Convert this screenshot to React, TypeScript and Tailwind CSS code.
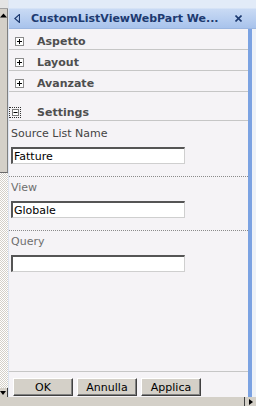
const FIELDS = [
  { label: 'Source List Name', value: 'Fatture', tone: 'text-[#444444]', first: true, divider: true },
  { label: 'View', value: 'Globale', tone: 'text-[#6e6e6e]', first: false, divider: true },
  { label: 'Query', value: '', tone: 'text-[#6e6e6e]', first: false, divider: false },
]

const SECTIONS = ['Aspetto', 'Layout', 'Avanzate']

function ToggleBox({ open }: { open?: boolean }) {
  return (
    <svg width="9" height="9" viewBox="0 0 9 9" className="shrink-0">
      <rect x="0.5" y="0.5" width="8" height="8" fill="#ffffff" stroke="#8a8a8a" />
      <line x1="2" y1="4.5" x2="7" y2="4.5" stroke="#000" />
      {!open && <line x1="4.5" y1="2" x2="4.5" y2="7" stroke="#000" />}
    </svg>
  )
}

function Scrollbar() {
  return (
    <div className="w-[8px] flex flex-col">
      <div className="h-[9px] bg-[#e4e4e4] border-b border-[#a0a0a0]" />
      <div className="h-[164px] bg-[#d4d0c8] border-r border-[#808080] border-b border-b-[#6a6a6a] relative">
        <svg width="7" height="5" viewBox="0 0 7 5" className="mt-[4px]">
          <path d="M0 4.5 L3.5 0.5 L7 4.5 Z" fill="#000" />
        </svg>
      </div>
      <div className="flex-1 bg-[repeating-conic-gradient(#d4d0c8_0_25%,#ffffff_0_50%)] bg-[length:2px_2px]" />
      <div className="h-[9px] bg-[#d4d0c8] border-r border-[#404040] flex items-center">
        <svg width="6" height="4" viewBox="0 0 6 4">
          <path d="M0 0 L6 0 L3 4 Z" fill="#000" />
        </svg>
      </div>
    </div>
  )
}

function Header() {
  return (
    <div className="h-[29px] shrink-0 flex items-center pt-[8px] pl-[5px] pr-[14px] bg-[linear-gradient(to_bottom,#e2ebf8_0px,#e2ebf8_8px,#c9daf4_9px,#a8c3ec_28px)] border-b border-[#9bb6e0]">
      <svg width="6" height="9" viewBox="0 0 6 9" className="shrink-0">
        <path d="M5.5 0.5 L0.8 4.5 L5.5 8.5 Z" fill="none" stroke="#1d3a70" strokeWidth="1.2" />
      </svg>
      <span className="ml-[11px] flex-1 text-[11px] leading-[13px] font-bold text-[#1d3a70] whitespace-nowrap">
        CustomListViewWebPart We...
      </span>
      <svg width="7" height="7" viewBox="0 0 7 7" className="shrink-0">
        <path d="M0.5 0.5 L6.5 6.5 M6.5 0.5 L0.5 6.5" stroke="#1d3a70" strokeWidth="1.6" />
      </svg>
    </div>
  )
}

function Field({ label, value, tone, first, divider }: (typeof FIELDS)[number]) {
  return (
    <div
      className={`px-[2px] pb-[12px] ${first ? 'pt-[6px]' : 'pt-[4px]'} ${
        divider ? 'border-b border-dotted border-[#8a8a8a]' : ''
      }`}
    >
      <div className={`h-[13px] leading-[13px] text-[11px] ${tone}`}>{label}</div>
      <div className="mt-[7px] w-[174px] h-[17px] bg-white border-t-2 border-l-2 border-t-[#555555] border-l-[#555555] border-r border-b border-r-[#cfcfcf] border-b-[#cfcfcf] flex items-center pl-[1px] text-[11px] text-black leading-[13px]">
        {value}
      </div>
    </div>
  )
}

export default function App() {
  return (
    <div className="w-[256px] h-[406px] flex flex-col overflow-hidden bg-[#f5f3f6] font-['DejaVu_Sans',sans-serif]">
      <div className="flex h-[397px]">
        <Scrollbar />
        <div className="flex-1 flex flex-col border-l border-[#dce4ef]">
          <Header />
          <div className="flex-1 flex">
            <div className="flex-1 flex flex-col">
              {SECTIONS.map((name) => (
                <div key={name} className="h-[21px] border-b border-[#c6c6c6] flex items-center pt-[4px] pl-[6px]">
                  <ToggleBox />
                  <span className="ml-[13px] text-[11px] leading-[13px] font-bold text-[#4f4f4f]">{name}</span>
                </div>
              ))}
              <div className="h-[29px] border-b border-[#c6c6c6] flex items-center pt-[13px]">
                <span className="w-[12px] h-[11px] border border-dotted border-[#333] flex items-center justify-center">
                  <svg width="7" height="7" viewBox="0 0 7 7">
                    <rect x="0.5" y="0.5" width="6" height="6" fill="#ffffff" stroke="#7a7a7a" />
                    <line x1="1.5" y1="3.5" x2="5.5" y2="3.5" stroke="#000" />
                  </svg>
                </span>
                <span className="ml-[16px] text-[11px] leading-[13px] font-bold text-[#4f4f4f]">Settings</span>
              </div>
              {FIELDS.map((f) => (
                <Field key={f.label} {...f} />
              ))}
              <div className="flex-1" />
              <div className="border-t border-[#c6c6c6] pt-[6px] pb-[1px] pl-[4px] flex gap-[4px]">
                {['OK', 'Annulla', 'Applica'].map((b) => (
                  <button
                    key={b}
                    className="w-[60px] h-[18px] bg-[#d4d0c8] border border-t-white border-l-white border-r-[#404040] border-b-[#404040] shadow-[inset_-1px_-1px_0_#808080] text-[11px] leading-[13px] text-black"
                  >
                    {b}
                  </button>
                ))}
              </div>
            </div>
            <div className="w-[4px] bg-[#7ba2e2]" />
            <div className="w-[4px] bg-[#eef2f8]" />
          </div>
        </div>
      </div>
      <div className="h-[9px] bg-[#d4d0c8] flex justify-end">
        <div className="w-[12px] border-l border-[#404040] flex items-center justify-center">
          <svg width="4" height="6" viewBox="0 0 4 6">
            <path d="M0 0 L4 3 L0 6 Z" fill="#000" />
          </svg>
        </div>
      </div>
    </div>
  )
}
